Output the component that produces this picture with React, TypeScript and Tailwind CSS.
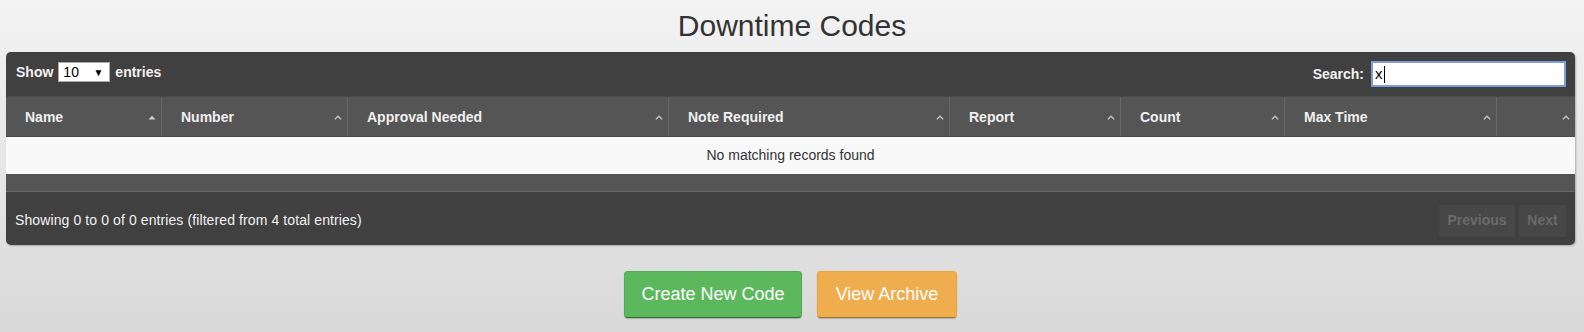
const columns = [
  { label: "Name", sorted: true },
  { label: "Number" },
  { label: "Approval Needed" },
  { label: "Note Required" },
  { label: "Report" },
  { label: "Count" },
  { label: "Max Time" },
  { label: "" },
];

function SortIcon({ active = false }: { active?: boolean }) {
  if (active) {
    return (
      <svg width="8" height="5" viewBox="0 0 8 5" className="shrink-0">
        <path d="M0.5 4.5 L4 0.8 L7.5 4.5 Z" fill="#d0d0d0" />
      </svg>
    );
  }
  return (
    <svg width="8" height="5" viewBox="0 0 8 5" className="shrink-0">
      <path d="M0.8 4.4 L4 1.2 L7.2 4.4" fill="none" stroke="#c8c8c8" strokeWidth="1.3" />
    </svg>
  );
}

export default function App() {
  return (
    <div className="min-h-[332px] w-full bg-gradient-to-b from-[#f3f3f3] to-[#d9d9d9] font-['Liberation_Sans',Arial,sans-serif]">
      <h1 className="pt-[9px] text-center text-[30px] leading-[34px] text-[#333]">Downtime Codes</h1>

      <div className="ml-[6px] mt-[9px] w-[1569px] overflow-hidden rounded-[5px] bg-[#404040] shadow-[1px_1px_2px_rgba(0,0,0,0.25)]">
        <div className="flex h-[44px] items-center justify-between pb-[2px] pl-[10px] pr-[9px] text-[14px] font-bold text-[#f2f2f2]">
          <div className="flex items-center pb-[2px]">
            <span>Show</span>
            <div className="mx-[5px] flex h-[20px] w-[52px] items-center justify-between border border-[#aaa] bg-white pl-[4px] pr-[6px] text-[14px] font-normal text-black">
              <span>10</span>
              <span className="text-[10px]">▼</span>
            </div>
            <span>entries</span>
          </div>
          <div className="flex items-center pt-[2px]">
            <span className="mr-[7px]">Search:</span>
            <div className="flex h-[26px] w-[195px] items-center border-2 border-[#7d9dd6] bg-white pl-[2px] text-[15px] font-normal text-black">
              <span>x</span>
              <span className="ml-[1px] h-[17px] w-px bg-black" />
            </div>
          </div>
        </div>

        <div className="grid h-[41px] grid-cols-[156px_186px_321px_281px_171px_164px_212px_78px] border-y border-[#4a4a4a] bg-[#555]">
          {columns.map((c, i) => (
            <div
              key={i}
              className={`flex items-center justify-between pl-[19px] pr-[5px] pt-[1px] text-[14px] font-bold text-[#f0f0f0] ${i < columns.length - 1 ? "border-r border-[#666]" : ""}`}
            >
              <span>{c.label}</span>
              <SortIcon active={c.sorted} />
            </div>
          ))}
        </div>

        <div className="flex h-[37px] items-center justify-center bg-[#f9f9f9] text-[14px] text-[#333]">
          No matching records found
        </div>
        <div className="h-[18px] border-b border-[#666] bg-[#555]" />

        <div className="flex h-[53px] items-center justify-between pl-[9px] pr-[9px] pt-[4px]">
          <span className="text-[14px] tracking-[0.1px] text-[#f2f2f2]">Showing 0 to 0 of 0 entries (filtered from 4 total entries)</span>
          <div className="flex gap-[4px]">
            <span className="flex h-[32px] w-[76px] items-center justify-center rounded-[2px] bg-[#474747] text-[14px] font-bold text-[#6a6a6a]">
              Previous
            </span>
            <span className="flex h-[32px] w-[47px] items-center justify-center rounded-[2px] bg-[#474747] text-[14px] font-bold text-[#6a6a6a]">
              Next
            </span>
          </div>
        </div>
      </div>

      <div className="mt-[26px] flex justify-center gap-[15px] pr-[3px]">
        <button className="h-[47px] w-[178px] rounded-[4px] border border-[#4cae4c] border-b-[#2f6f2f] bg-[#5cb85c] text-[18px] text-white shadow-[0_1px_1px_rgba(0,0,0,0.2)]">
          Create New Code
        </button>
        <button className="h-[47px] w-[140px] rounded-[4px] border border-[#eea236] border-b-[#a9752c] bg-[#f0ad4e] text-[18px] text-white shadow-[0_1px_1px_rgba(0,0,0,0.2)]">
          View Archive
        </button>
      </div>
    </div>
  );
}
